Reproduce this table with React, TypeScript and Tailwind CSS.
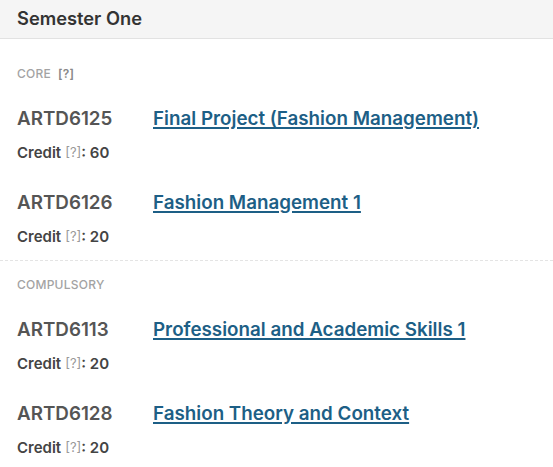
import React from "react";

type Course = { code: string; title: string; credit: number };

const groups: { label: string; help?: boolean; courses: Course[] }[] = [
  {
    label: "CORE",
    help: true,
    courses: [
      { code: "ARTD6125", title: "Final Project (Fashion Management)", credit: 60 },
      { code: "ARTD6126", title: "Fashion Management 1", credit: 20 },
    ],
  },
  {
    label: "COMPULSORY",
    courses: [
      { code: "ARTD6113", title: "Professional and Academic Skills 1", credit: 20 },
      { code: "ARTD6128", title: "Fashion Theory and Context", credit: 20 },
    ],
  },
];

function CourseItem({ c, first }: { c: Course; first: boolean }) {
  return (
    <div className={first ? "mt-[23px]" : "mt-[28px]"}>
      <div className="flex h-[24px] items-center">
        <span className="w-[136px] text-[18.8px] font-semibold text-[#555555]">{c.code}</span>
        <a href="#" className="text-[18.8px] font-semibold text-[#1d5f86] underline decoration-[1.5px] underline-offset-[2px]">
          {c.title}
        </a>
      </div>
      <div className="mt-[12px] flex h-[20px] items-center text-[15px] text-[#444444]">
        <span className="font-semibold">Credit</span>
        <span className="ml-[4px] text-[13px] text-[#999999]">[?]</span>
        <span className="font-semibold">: {c.credit}</span>
      </div>
    </div>
  );
}

export default function App() {
  return (
    <div className="h-[467px] w-[553px] overflow-hidden bg-white" style={{ fontFamily: "Inter, 'Noto Sans', sans-serif" }}>
      <div className="flex h-[39px] items-center border-b border-[#e2e2e2] bg-[#f5f5f5] px-[17px]">
        <span className="text-[18.3px] font-semibold text-[#333333]">Semester One</span>
      </div>
      {groups.map((g, i) => (
        <div key={g.label} className={i === 0 ? "px-[17px] pt-[25px] pb-[13px] border-b border-dashed border-[#e4e4e4]" : "px-[17px] pt-[14px]"}>
          <div className="flex h-[20px] items-center text-[12px] font-medium tracking-[0.02em] text-[#a3a3a3]">
            <span>{g.label}</span>
            {g.help && <span className="ml-[7px] font-semibold text-[#888888]">[?]</span>}
          </div>
          {g.courses.map((c, j) => (
            <CourseItem key={c.code} c={c} first={j === 0} />
          ))}
        </div>
      ))}
    </div>
  );
}
